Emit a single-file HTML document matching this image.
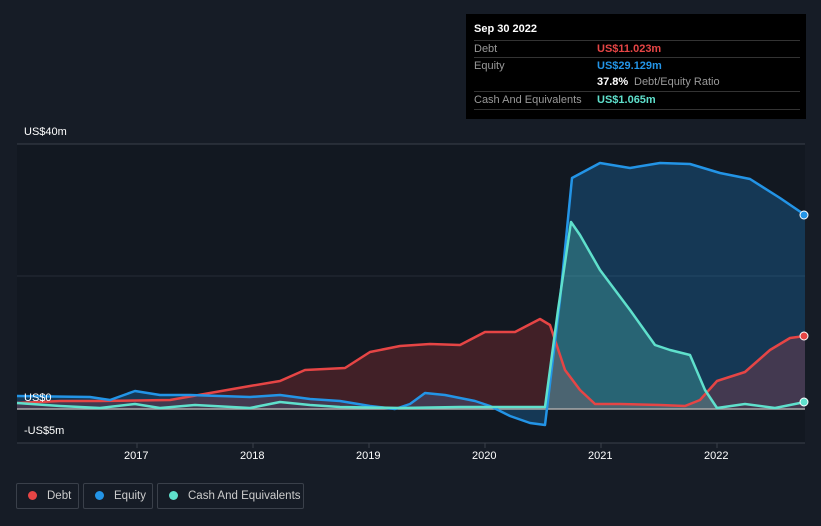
<html><head><style>
body{margin:0;width:821px;height:526px;background:#161c26;font-family:"Liberation Sans",sans-serif;overflow:hidden;position:relative}
.t{position:absolute;color:#fff;font-size:12px}
.tip{position:absolute;left:466px;top:14px;width:340px;height:105px;background:#000;}
.row{position:absolute;left:8px;width:326px;font-size:11px;color:#999;border-top:1px solid #333;height:17px;line-height:17px}
.leg{position:absolute;top:483px;height:26px;border:1px solid #3a404a;border-radius:2px;color:#ccc;font-size:11.5px;line-height:24px;box-sizing:border-box;white-space:nowrap}
.dot{display:inline-block;width:9px;height:9px;border-radius:50%;margin:0 10px 0 11px;vertical-align:-1px}
</style></head><body>
<svg width="821" height="526" style="position:absolute;left:0;top:0">
<rect x="17" y="144" width="788" height="299" fill="#121821"/>
<line x1="17" y1="144" x2="805" y2="144" stroke="#3a404a"/>
<line x1="17" y1="276" x2="805" y2="276" stroke="#262c36"/>
<line x1="17" y1="443" x2="805" y2="443" stroke="#3a404a"/>
<g stroke="#3a404a"><line x1="137" y1="443" x2="137" y2="448"/><line x1="253" y1="443" x2="253" y2="448"/><line x1="369" y1="443" x2="369" y2="448"/><line x1="485" y1="443" x2="485" y2="448"/><line x1="601" y1="443" x2="601" y2="448"/><line x1="717" y1="443" x2="717" y2="448"/></g>
<polygon fill="rgba(33,150,243,0.25)" points="17,409 17,396 90,397 110,400 135,391 160,395 190,395 250,397 280,395 310,399 340,401 370,406 395,409 410,404 425,393 445,395 475,401 490,406 510,416 530,423 545,425 560,300 572,178 600,163 630,168 660,163 690,164 720,173 750,179 780,198 805,215 805,409"/>
<polygon fill="rgba(231,65,65,0.22)" points="17,409 17,403 60,401 100,401 170,400 210,393 250,386 280,381 305,370 345,368 370,352 400,346 430,344 460,345 485,332 515,332 540,319 550,325 565,370 580,390 595,404 620,404 660,405 685,406 700,400 717,381 745,372 770,350 790,338 805,336 805,409"/>
<polygon fill="rgba(100,230,210,0.25)" points="545,409 545,407 558,310 571,222 580,235 600,270 630,310 655,345 670,350 690,355 705,390 717,409"/>
<line x1="17" y1="409" x2="805" y2="409" stroke="#aaa" stroke-width="1.5"/>
<g fill="none" stroke-width="2.5" stroke-linejoin="round">
<polyline stroke="#e64545" points="17,403 60,401 100,401 170,400 210,393 250,386 280,381 305,370 345,368 370,352 400,346 430,344 460,345 485,332 515,332 540,319 550,325 565,370 580,390 595,404 620,404 660,405 685,406 700,400 717,381 745,372 770,350 790,338 805,336"/>
<polyline stroke="#2394e6" points="17,396 90,397 110,400 135,391 160,395 190,395 250,397 280,395 310,399 340,401 370,406 395,409 410,404 425,393 445,395 475,401 490,406 510,416 530,423 545,425 560,300 572,178 600,163 630,168 660,163 690,164 720,173 750,179 780,198 805,215"/>
<polyline stroke="#5fe0cc" points="17,403 60,406 100,408 135,404 160,408 195,405 250,408 280,402 310,405 340,407 400,408 460,407 520,407 545,407 558,310 571,222 580,235 600,270 630,310 655,345 670,350 690,355 705,390 717,408 745,404 775,408 805,402"/>
</g>
<circle cx="804" cy="336" r="4" fill="#e64545" stroke="#fff" stroke-width="1"/>
<circle cx="804" cy="215" r="4" fill="#2394e6" stroke="#fff" stroke-width="1"/>
<circle cx="804" cy="402" r="4" fill="#5fe0cc" stroke="#fff" stroke-width="1"/>
</svg>
<div class="t" style="left:24px;top:126px;font-size:11px">US$40m</div>
<div class="t" style="left:24px;top:392px;font-size:11px">US$0</div>
<div class="t" style="left:24px;top:425px;font-size:11px">-US$5m</div>
<div class="t" style="left:124px;top:450px;font-size:11px">2017</div>
<div class="t" style="left:240px;top:450px;font-size:11px">2018</div>
<div class="t" style="left:356px;top:450px;font-size:11px">2019</div>
<div class="t" style="left:472px;top:450px;font-size:11px">2020</div>
<div class="t" style="left:588px;top:450px;font-size:11px">2021</div>
<div class="t" style="left:704px;top:450px;font-size:11px">2022</div>
<div class="tip">
<div style="position:absolute;left:8px;top:9px;color:#fff;font-size:11px;font-weight:bold">Sep 30 2022</div>
<div class="row" style="top:26px">Debt<span style="position:absolute;left:123px;color:#e64545;font-weight:bold">US$11.023m</span></div>
<div class="row" style="top:43px">Equity<span style="position:absolute;left:123px;color:#2394e6;font-weight:bold">US$29.129m</span></div>
<div class="row" style="top:60px;border-top:none"><span style="position:absolute;left:123px;color:#fff;font-weight:bold">37.8%</span><span style="position:absolute;left:160px">Debt/Equity Ratio</span></div>
<div class="row" style="top:77px;border-bottom:1px solid #333">Cash And Equivalents<span style="position:absolute;left:123px;color:#5fe0cc;font-weight:bold">US$1.065m</span></div>
</div>
<div class="leg" style="left:16px;width:63px"><span class="dot" style="background:#e64545"></span>Debt</div>
<div class="leg" style="left:83px;width:70px"><span class="dot" style="background:#2394e6"></span>Equity</div>
<div class="leg" style="left:157px;width:147px"><span class="dot" style="background:#5fe0cc"></span>Cash And Equivalents</div>
</body></html>
